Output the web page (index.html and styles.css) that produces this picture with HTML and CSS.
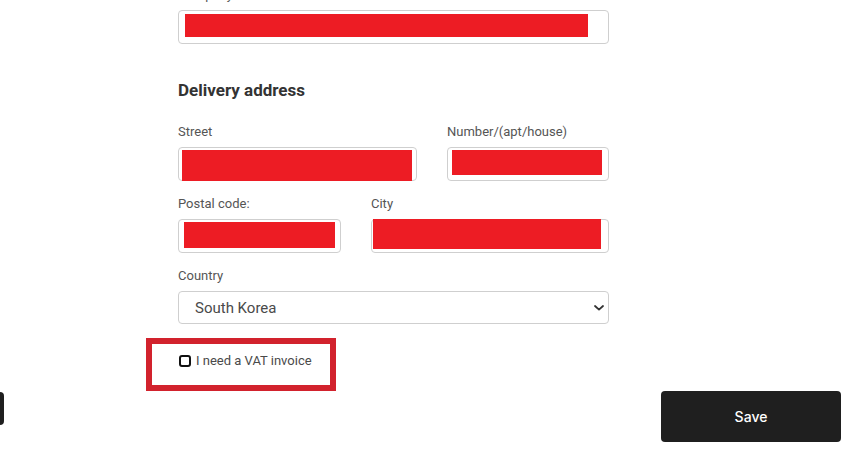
FILE: index.html
```html
<!DOCTYPE html>
<html lang="en">
<head>
    <meta charset="UTF-8">
    <meta name="viewport" content="width=device-width, initial-scale=1.0">
    <title>Delivery address</title>
    <link rel="stylesheet" href="styles.css">
</head>
<body>
    <div class="form">
        <label class="label">Company</label>
        <div class="box"><span class="redact redact-company"></span></div>

        <h2 class="title">Delivery address</h2>

        <div class="row row-street">
            <div class="field">
                <label class="label">Street</label>
                <div class="box"><span class="redact redact-street"></span></div>
            </div>
            <div class="field">
                <label class="label">Number/(apt/house)</label>
                <div class="box"><span class="redact redact-number"></span></div>
            </div>
        </div>

        <div class="row row-city">
            <div class="field">
                <label class="label">Postal code:</label>
                <div class="box"><span class="redact redact-postal"></span></div>
            </div>
            <div class="field">
                <label class="label">City</label>
                <div class="box"><span class="redact redact-city"></span></div>
            </div>
        </div>

        <div class="field">
            <label class="label" for="country">Country</label>
            <div class="select-wrap">
                <select id="country" class="select">
                    <option>South Korea</option>
                    <option>Poland</option>
                    <option>Germany</option>
                </select>
                <svg class="chevron" width="10" height="6" viewBox="0 0 10 6">
                    <path d="M1 1l4 3.6L9 1" fill="none" stroke="#333" stroke-width="1.8" stroke-linecap="round" stroke-linejoin="round"/>
                </svg>
            </div>
        </div>

        <div class="vat">
            <label class="vat-label"><input type="checkbox" class="check">I need a VAT invoice</label>
        </div>
    </div>

    <div class="footer">
        <button class="btn btn-back" aria-label="Back"></button>
        <button class="btn btn-save">Save</button>
    </div>
</body>
</html>
```

FILE: styles.css
```css
body {
    margin: 0;
    font-family: Roboto, "Liberation Sans", sans-serif;
    color: #555;
    background: #fff;
}

.form {
    width: 431px;
    margin: -14px 0 0 178px;
}

.label {
    display: block;
    font-size: 13px;
    line-height: 17px;
    color: #555;
    margin-bottom: 7px;
}

.box {
    box-sizing: border-box;
    height: 34px;
    border: 1px solid #cfcfcf;
    border-radius: 4px;
    display: flow-root;
}

.redact {
    display: block;
    background: #ed1c24;
}
.redact-company { margin: 3px 0 0 6px; width: 403px; height: 23px; }
.redact-street  { margin: 2px 0 0 3px; width: 230px; height: 31px; }
.redact-number  { margin: 2px 0 0 4px; width: 150px; height: 25px; }
.redact-postal  { margin: 2px 0 0 5px; width: 151px; height: 26px; }
.redact-city    { margin: -1px 0 0 1px; width: 228px; height: 30px; }

.title {
    margin: 36px 0 23px;
    font-size: 17px;
    line-height: 20px;
    font-weight: 700;
    color: #333;
}

.row {
    display: grid;
    column-gap: 30px;
    margin-bottom: 14px;
}
.row-street { grid-template-columns: 239px 1fr; }
.row-city { grid-template-columns: 163px 1fr; }

.select-wrap {
    position: relative;
}

.select {
    appearance: none;
    -webkit-appearance: none;
    display: block;
    box-sizing: border-box;
    width: 100%;
    height: 33px;
    padding: 0 16px;
    border: 1px solid #cfcfcf;
    border-radius: 4px;
    background: #fff;
    font-family: Roboto, "Liberation Sans", sans-serif;
    font-size: 15px;
    color: #4a4a4a;
}

.chevron {
    position: absolute;
    right: 5px;
    top: 14px;
}

.vat {
    box-sizing: border-box;
    width: 190px;
    height: 53px;
    margin: 14px 0 0 -32px;
    border: 6px solid #d2222d;
    padding: 9px 0 0 26px;
}

.vat-label {
    display: flex;
    align-items: center;
    font-size: 13px;
    line-height: 16px;
    color: #4a4a4a;
}

.check {
    appearance: none;
    -webkit-appearance: none;
    box-sizing: border-box;
    width: 12px;
    height: 12px;
    margin: 0 5px 0 1px;
    border: 2px solid #111;
    border-radius: 3px;
    background: #fff;
}

.footer {
    display: flex;
    justify-content: space-between;
    align-items: flex-start;
    padding-right: 8px;
}

.btn {
    border: none;
    border-radius: 4px;
    background: #1f1f1f;
    color: #fff;
    cursor: pointer;
}

.btn-back {
    width: 120px;
    height: 33px;
    margin: 1px 0 0 -116px;
}

.btn-save {
    width: 180px;
    height: 51px;
    font-family: Inter, Roboto, sans-serif;
    font-size: 14px;
    font-weight: 500;
}
```
